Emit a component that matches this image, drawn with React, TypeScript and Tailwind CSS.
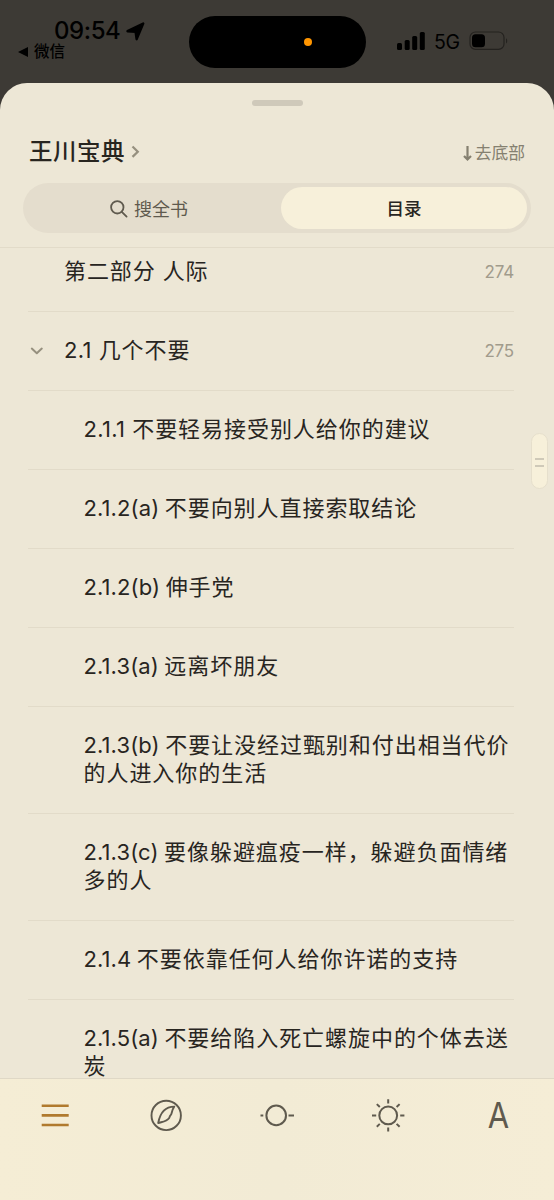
interface Chapter {
  num: string
  title: string
  page?: number
  level: 1 | 2
  expanded?: boolean
}

const chapters: Chapter[] = [
  { num: '', title: '第二部分 人际', page: 274, level: 1 },
  { num: '2.1', title: '几个不要', page: 275, level: 1, expanded: true },
  { num: '2.1.1', title: '不要轻易接受别人给你的建议', level: 2 },
  { num: '2.1.2(a)', title: '不要向别人直接索取结论', level: 2 },
  { num: '2.1.2(b)', title: '伸手党', level: 2 },
  { num: '2.1.3(a)', title: '远离坏朋友', level: 2 },
  { num: '2.1.3(b)', title: '不要让没经过甄别和付出相当代价的人进入你的生活', level: 2 },
  { num: '2.1.3(c)', title: '要像躲避瘟疫一样，躲避负面情绪多的人', level: 2 },
  { num: '2.1.4', title: '不要依靠任何人给你许诺的支持', level: 2 },
  { num: '2.1.5(a)', title: '不要给陷入死亡螺旋中的个体去送炭', level: 2 },
]

function StatusBar() {
  return (
    <div className="h-[83px] shrink-0 flex text-black">
      <div className="w-[189px] pt-[17px]">
        <div className="flex items-center h-7 pl-[54px]">
          <span className="text-[24px] leading-7 font-medium tracking-[-0.4px]">09:54</span>
          <svg width="19" height="19" viewBox="0 0 19 19" className="ml-[6px]">
            <path d="M17.2 1.6 10.6 17.2 9.6 9.8 1.5 9.2z" fill="black" stroke="black" strokeWidth="2.4" strokeLinejoin="round" />
          </svg>
        </div>
        <div className="flex items-center h-4 mt-[-1px] pl-[18px]">
          <svg width="10" height="10" viewBox="0 0 10 10">
            <path d="M0 5 10 0v10z" />
          </svg>
          <span className="ml-[6px] text-[15.5px] leading-4 font-medium">微信</span>
        </div>
      </div>
      <div className="w-[177px] h-[52px] mt-4 rounded-full bg-black flex items-center justify-end pr-[54px]">
        <span className="size-2 rounded-full bg-[#ff9500]" />
      </div>
      <div className="flex items-center h-[20px] mt-[31px] ml-[31px]">
        <svg width="28" height="18" viewBox="0 0 28 18">
          <rect x="0" y="11" width="5" height="7" rx="1.5" />
          <rect x="7.7" y="8" width="5" height="10" rx="1.5" />
          <rect x="15.2" y="4" width="5" height="14" rx="1.5" />
          <rect x="22.8" y="0" width="5" height="18" rx="1.5" />
        </svg>
        <span className="ml-[9px] mt-px w-[28px] text-[19.5px] leading-5 tracking-[-0.4px]">5G</span>
        <svg width="39" height="20" viewBox="0 0 39 20" className="ml-[7px]">
          <rect x="1" y="1" width="34" height="17.4" rx="5.5" fill="none" stroke="#24221f" strokeWidth="1.2" />
          <rect x="3" y="3.2" width="13" height="13" rx="3.5" />
          <path d="M37 7.2c1.6.8 1.6 4.4 0 5.2z" fill="#24221f" />
        </svg>
      </div>
    </div>
  )
}

function ChapterRow({ chapter }: { chapter: Chapter }) {
  return (
    <div className="relative border-b border-[#e2dbc9] pt-[24px] pb-[26px] flex">
      {chapter.expanded && (
        <svg width="14" height="9" viewBox="0 0 14 9" className="absolute left-[2px] top-[35px]" fill="none" stroke="#96907f" strokeWidth="2" strokeLinecap="round" strokeLinejoin="round">
          <path d="M1.8 1.6 6.8 6.2l5-4.6" />
        </svg>
      )}
      <div
        className={
          chapter.level === 1
            ? 'flex-1 pl-[36px] text-[22px] leading-[28px] tracking-[0.9px]'
            : 'flex-1 pl-[55.5px] text-[22px] leading-[28px] tracking-[0.95px]'
        }
      >
        {chapter.num && (
          <span className={chapter.num.endsWith('1') ? 'tracking-[0.3px] mr-[7px]' : 'tracking-[0.1px] mr-[5.5px]'}>
            {chapter.num}
          </span>
        )}
        {chapter.title}
      </div>
      {chapter.page && (
        <span className="mt-px -mb-px text-[17px] leading-[28px] tracking-[-0.2px] text-[#a19b8c]">{chapter.page}</span>
      )}
    </div>
  )
}

function TabBar() {
  return (
    <div className="h-[122px] shrink-0 border-t border-[#dfd8c6] bg-linear-to-r from-[#f5edd5] via-[#f2ebd5] to-[#f5edd6] pt-[12px] grid grid-cols-5 justify-items-center">
      <svg width="48" height="48" viewBox="0 0 48 48" fill="none" stroke="#b07a2e" strokeWidth="2.6">
        <path d="M10.7 14.8h27M10.7 24.4h27M10.7 34h27" />
      </svg>
      <svg width="48" height="48" viewBox="0 0 48 48" fill="none" stroke="#5f5a4e" strokeWidth="1.9" strokeLinejoin="round">
        <circle cx="24.2" cy="24.4" r="14.7" />
        <path d="M32.3 15.6C26 15.6 18.6 19 16.2 32c5.6-1.5 8.6-1.6 10.8-4.8.9-1.3.5-2 1.8-3.3 1.2-1.5.8-4.2 3.5-8.3z" />
      </svg>
      <svg width="48" height="48" viewBox="0 0 48 48" fill="none" stroke="#5f5a4e" strokeWidth="2">
        <circle cx="23.2" cy="24.4" r="9.8" />
        <path d="M7.5 24.4h2.8M35.5 24.4H41" />
      </svg>
      <svg width="48" height="48" viewBox="0 0 48 48" fill="none" stroke="#5f5a4e" strokeWidth="2">
        <circle cx="24.2" cy="24.4" r="8.9" />
        <path d="M24.2 8.2v4.2M24.2 36.4v4.2M8 24.4h4.2M36.2 24.4h4.2M12.8 13.1l3 2.9M32.6 32.9l3 2.9M35.6 13.1l-3 2.9M15.8 32.9l-3 2.9" />
      </svg>
      <span className="h-12 text-[36px] leading-[49px] scale-x-[0.86] text-[#5f5a4e]">A</span>
    </div>
  )
}

export default function App() {
  return (
    <div lang="zh-CN" className="w-[554px] h-[1200px] overflow-hidden flex flex-col bg-[#3d3a35] text-[#28251f] font-['Inter','Noto_Sans_CJK_SC',sans-serif]">
      <StatusBar />
      <div className="relative flex-1 min-h-0 flex flex-col rounded-t-[27px] bg-[#ede7d6] overflow-hidden">
        <div className="h-[165px] shrink-0 border-b border-[#e2dbc9]">
          <div className="mx-auto mt-[17px] w-[51px] h-[6px] rounded-full bg-[#cfc9ba]" />
          <div className="flex items-center justify-between mt-[29px] h-[34px] pl-[29px] pr-[29px]">
            <h1 className="flex items-center text-[23.5px] leading-[34px] font-medium tracking-[0.5px]">
              王川宝典
              <svg width="9" height="14" viewBox="0 0 9 14" className="ml-[6px]" fill="none" stroke="#96907f" strokeWidth="2.2">
                <path d="M1.5 1.5 6.8 6.7l-5.3 5.2" />
              </svg>
            </h1>
            <button className="flex items-center pt-[2px] text-[16.8px] leading-6 text-[#858070]">
              <svg width="10" height="17" viewBox="0 0 10 17" className="mr-[2px]" fill="none" stroke="#858070" strokeWidth="2.2">
                <path d="M4.5 1v13.5M1 11l3.5 3.5L8 11" />
              </svg>
              去底部
            </button>
          </div>
          <div className="flex mt-[14px] ml-[23px] w-[508px] h-[50px] rounded-full bg-[#e4ddcd] p-1">
            <button className="w-[254px] pr-[10px] pt-[2px] flex items-center justify-center text-[18px] text-[#5f5a4e]">
              <svg width="18" height="18" viewBox="0 0 18 18" className="mr-[6px]" fill="none" stroke="#5f5a4e" strokeWidth="1.8" strokeLinecap="round">
                <circle cx="7.3" cy="7.3" r="6.2" />
                <path d="m11.8 11.8 4.8 4.8" />
              </svg>
              搜全书
            </button>
            <button className="w-[246px] h-[42px] pt-[2px] rounded-full bg-[#f7f0da] text-[17.5px] font-medium">目录</button>
          </div>
        </div>

        <div className="flex-1 min-h-0 overflow-hidden pl-[28px] pr-[40px]">
          <div className="mt-[-15px]">
            {chapters.map(c => (
              <ChapterRow key={c.num + c.title} chapter={c} />
            ))}
          </div>
        </div>

        {/* scroll handle */}
        <div className="absolute right-[6px] top-[350px] w-[17px] h-[56px] pt-[2px] rounded-full bg-[#f7f0da] border border-[#e6dfcc] flex flex-col items-center justify-center gap-[5px]">
          <span className="w-[9px] h-[2px] bg-[#cfc9b8]" />
          <span className="w-[9px] h-[2px] bg-[#cfc9b8]" />
        </div>

        <TabBar />
      </div>
    </div>
  )
}
